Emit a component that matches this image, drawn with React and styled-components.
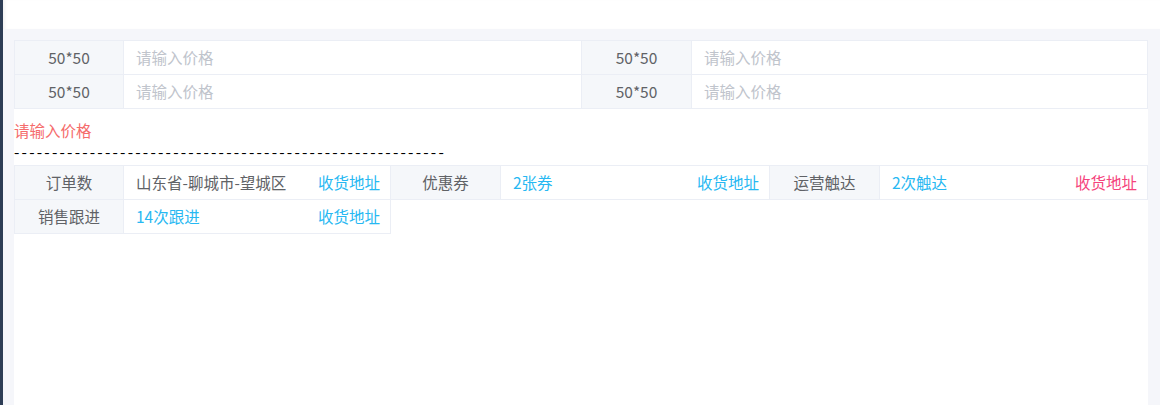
import React from "react";
import styled, { createGlobalStyle } from "styled-components";

const Global = createGlobalStyle`
  html, body { margin: 0; padding: 0; }
  body {
    font-family: "Noto Sans CJK SC", "Noto Sans", "Liberation Sans", sans-serif;
    font-size: 15.5px;
    color: #606266;
    background: #f5f6fa;
  }
`;

const Page = styled.div`
  display: flex;
  height: 405px;
  overflow: hidden;
`;

const Sidebar = styled.div`
  width: 3px;
  flex: none;
  background: #2d3d55;
`;

const Main = styled.div`
  flex: 1;
  display: flex;
  flex-direction: column;
  background: #f5f6fa;
`;

const Header = styled.div`
  height: 29px;
  flex: none;
  background: #fff;
  box-shadow: inset 4px 0 4px -3px rgba(0, 0, 0, 0.08);
`;

const Content = styled.div`
  flex: 1;
  display: flex;
  padding: 11px 12px 0 11px;
`;

const Panel = styled.div`
  flex: 1;
  background: #fff;
  display: flex;
  flex-direction: column;
  align-items: flex-start;
`;

const Grid = styled.div`
  display: grid;
  grid-template-columns: ${(p) => p.$cols};
  width: 100%;
  box-sizing: border-box;
  margin-top: ${(p) => p.$mt || 0}px;
`;

const Cell = styled.div`
  box-sizing: border-box;
  height: ${(p) => (p.$first ? 35 : 34)}px;
  display: flex;
  align-items: center;
  padding-bottom: 2px;
  border-bottom: 1px solid #ebeef5;
  border-right: 1px solid #ebeef5;
  ${(p) => p.$first && "border-top: 1px solid #ebeef5;"}
  ${(p) => p.$left && "border-left: 1px solid #ebeef5;"}
  line-height: 22px;
  white-space: nowrap;
`;

const Label = styled(Cell)`
  justify-content: center;
  background: #f5f7fa;
  color: #606266;
`;

const Value = styled(Cell)`
  justify-content: space-between;
  padding-left: 12px;
  padding-right: 10px;
  background: #fff;
`;

const Placeholder = styled.span`
  color: #c0c4cc;
`;

const Text = styled.span`
  color: ${(p) => p.$color || "#606266"};
`;

const Link = styled.span`
  color: ${(p) => (p.$pink ? "#f5437c" : "#27b8f2")};
  cursor: pointer;
`;

const ErrorText = styled.div`
  color: #f56c6c;
  margin-top: 10px;
  line-height: 22px;
`;

const DashLine = styled.div`
  color: #000;
  line-height: 20px;
  letter-spacing: 2.2px;
  white-space: nowrap;
`;

const priceRows = [
  ["50*50", "50*50"],
  ["50*50", "50*50"],
];

export default function App() {
  return (
    <>
      <Global />
      <Page>
        <Sidebar />
        <Main>
          <Header />
          <Content>
            <Panel>
              <Grid $cols="110px 458px 110px 1fr">
                {priceRows.map((row, i) =>
                  row.map((label, j) => (
                    <React.Fragment key={`${i}-${j}`}>
                      <Label $first={i === 0} $left={j === 0}>
                        {label}
                      </Label>
                      <Value $first={i === 0}>
                        <Placeholder>请输入价格</Placeholder>
                      </Value>
                    </React.Fragment>
                  ))
                )}
              </Grid>
              <ErrorText>请输入价格</ErrorText>
              <DashLine>{"-".repeat(57)}</DashLine>
              <Grid $cols="110px 267px 110px 269px 110px 1fr" $mt={4}>
                <Label $first $left>订单数</Label>
                <Value $first>
                  <Text>山东省-聊城市-望城区</Text>
                  <Link>收货地址</Link>
                </Value>
                <Label $first>优惠券</Label>
                <Value $first>
                  <Text $color="#27b8f2">2张券</Text>
                  <Link>收货地址</Link>
                </Value>
                <Label $first>运营触达</Label>
                <Value $first>
                  <Text $color="#27b8f2">2次触达</Text>
                  <Link $pink>收货地址</Link>
                </Value>
                <Label $left>销售跟进</Label>
                <Value>
                  <Text $color="#27b8f2">14次跟进</Text>
                  <Link>收货地址</Link>
                </Value>
              </Grid>
            </Panel>
          </Content>
        </Main>
      </Page>
    </>
  );
}
